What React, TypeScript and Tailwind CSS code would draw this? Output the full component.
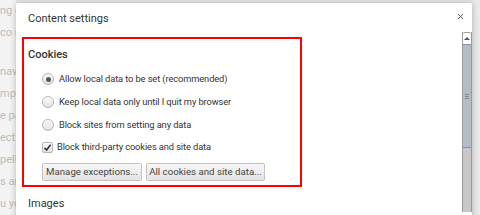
import { X } from 'lucide-react'

// lo que asoma de la página de ajustes detrás del diálogo
const FONDO_ARRIBA = ['ng d', 'co in']
const FONDO = ['navig', 'mpl', 'e pa', 'ectio', 'pell', 's and', 'u you']

const OPCIONES = [
  { texto: 'Allow local data to be set (recommended)', marcada: true },
  { texto: 'Keep local data only until I quit my browser', marcada: false },
  { texto: 'Block sites from setting any data', marcada: false },
]

function Radio({ marcada }: { marcada: boolean }) {
  return (
    <span className="flex h-[12px] w-[12px] shrink-0 items-center justify-center rounded-full border border-[#b4b4b4] bg-gradient-to-b from-[#fdfdfd] to-[#e2e2e2]">
      {marcada && <span className="h-[5px] w-[5px] rounded-full bg-[#555]" />}
    </span>
  )
}

function Boton({ children, ancho }: { children: string; ancho: string }) {
  return (
    <button
      className={`${ancho} h-[18px] shrink-0 whitespace-nowrap rounded-[2px] border border-[#c3c3c3] bg-gradient-to-b from-[#f7f7f7] to-[#e3e3e3] text-[9.7px] leading-none text-[#444]`}
    >
      {children}
    </button>
  )
}

export default function App() {
  return (
    <div
      className="relative h-[215px] w-[480px] overflow-hidden bg-[#e9e9e9] text-[#333]"
      style={{ fontFamily: 'Roboto, "Liberation Sans", sans-serif' }}
    >
      <div className="w-[16px] overflow-hidden bg-[#f3f3f3] text-[11px] text-[#bcbcbc]">
        <div className="flex flex-col leading-[22px]">
          {FONDO_ARRIBA.map((l) => (
            <span key={l} className="h-[22px] whitespace-nowrap">
              {l}
            </span>
          ))}
        </div>
        <div className="mt-[17px] flex flex-col leading-[22px]">
          {FONDO.map((l) => (
            <span key={l} className="h-[22px] whitespace-nowrap">
              {l}
            </span>
          ))}
        </div>
      </div>

      {/* diálogo de ajustes de contenido */}
      <div className="absolute left-[16px] top-[3px] h-[240px] w-[456px] rounded-[2px] bg-white shadow-[0_0_6px_rgba(0,0,0,0.25)]">
        <div className="flex h-[34px] items-start justify-between pl-[12px] pr-[7px] pt-[8px]">
          <span className="text-[11px] leading-[16px]">Content settings</span>
          <X size={9} strokeWidth={2.6} className="mt-[1px] text-[#555]" />
        </div>

        <div className="flex">
          <div className="flex-1 pl-[6px]">
            <div className="w-[280px] border-2 border-[#f00] pb-[4px] pl-[4px] pt-[8px]">
              <div className="text-[11px] font-medium leading-[16px]">Cookies</div>
              <div className="mt-[8px] flex flex-col gap-[6.8px] pl-[14px] text-[9.3px] tracking-[-0.1px]">
                {OPCIONES.map((o) => (
                  <label key={o.texto} className="flex h-[16px] items-center gap-[5px] whitespace-nowrap">
                    <Radio marcada={o.marcada} />
                    <span>{o.texto}</span>
                  </label>
                ))}
                <label className="flex h-[16px] items-center gap-[4px] whitespace-nowrap">
                  <span className="flex h-[11px] w-[11px] shrink-0 items-center justify-center rounded-[2px] border border-[#b4b4b4] bg-gradient-to-b from-[#fdfdfd] to-[#e2e2e2]">
                    <svg viewBox="0 0 10 10" className="h-[9px] w-[9px]">
                      <path d="M1.6 5.3 L4 7.8 L8.4 2" fill="none" stroke="#333" strokeWidth="1.8" />
                    </svg>
                  </span>
                  <span>Block third-party cookies and site data</span>
                </label>
                <div className="mt-[1px] flex gap-[4px] tracking-normal">
                  <Boton ancho="w-[100px]">Manage exceptions...</Boton>
                  <Boton ancho="w-[119px]">All cookies and site data...</Boton>
                </div>
              </div>
            </div>
            <div className="mt-[9px] pl-[6px] text-[11px] leading-[16px]">Images</div>
          </div>

          {/* barra de desplazamiento */}
          <div className="mt-[-5px] flex w-[10px] flex-col border-x border-[#9a9a9a]">
            <div className="flex h-[12px] items-center justify-center rounded-t-[2px] border-t border-[#9a9a9a] bg-white">
              <span className="h-0 w-0 border-x-[3px] border-b-[3px] border-x-transparent border-b-[#555]" />
            </div>
            <div className="flex h-[104px] items-center justify-center border-y border-[#8a949e] bg-[#b4bdc6]">
              <span className="flex flex-col gap-[1px]">
                <span className="h-px w-[4px] bg-[#8a8a8a]" />
                <span className="h-px w-[4px] bg-[#8a8a8a]" />
                <span className="h-px w-[4px] bg-[#8a8a8a]" />
              </span>
            </div>
            <div className="flex-1 bg-[#c8c8c8]" />
          </div>
        </div>
      </div>
    </div>
  )
}
